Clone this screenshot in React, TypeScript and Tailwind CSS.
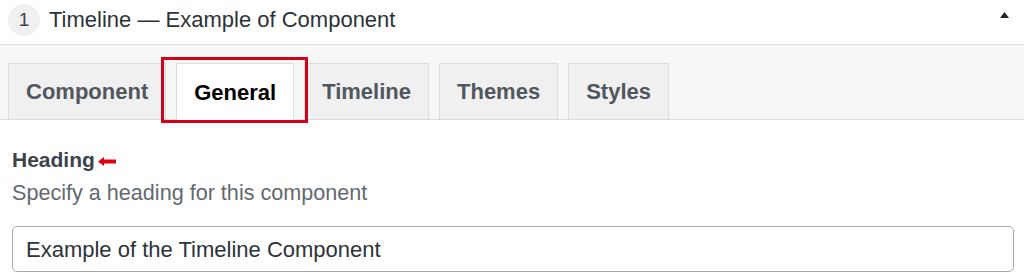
const tabs = ["Component", "General", "Timeline", "Themes", "Styles"];

export default function App() {
  const active = "General";

  return (
    <div
      className="relative w-[1024px] h-[278px] bg-white overflow-hidden"
      style={{ fontFamily: "'Liberation Sans', Arial, sans-serif" }}
    >
      {/* Panel header */}
      <div className="flex items-start h-[45px] pt-[4px] pl-[8px] border-b border-[#dcdcde]">
        <div className="w-[32px] h-[32px] rounded-full bg-[#f0f0f1] flex items-center justify-center text-[19px] text-[#3c434a]">
          1
        </div>
        <div className="ml-[9px] leading-[32px] text-[22px] text-[#2c3338]">
          Timeline — Example of Component
        </div>
        <svg className="ml-auto mr-[15px] mt-[8px]" width="9" height="6" viewBox="0 0 9 6">
          <polygon points="4.5,0 9,6 0,6" fill="#1d2327" />
        </svg>
      </div>

      {/* Tab strip */}
      <div className="flex gap-[10px] bg-[#f6f7f7] pt-[18px] pl-[8px] border-b border-[#dcdcde]">
        {tabs.map((t) => {
          const on = t === active;
          return (
            <div
              key={t}
              className={
                on
                  ? "h-[57px] -mb-px px-[17px] flex items-center border border-b-0 border-[#dcdcde] bg-white text-[22px] font-bold text-[#000]"
                  : "h-[56px] px-[17px] flex items-center border border-b-0 border-[#dcdcde] bg-[#f0f0f1] text-[22px] font-bold text-[#50575e]"
              }
            >
              {t}
            </div>
          );
        })}
      </div>

      {/* Field */}
      <div className="pl-[12px] pr-[10px] pt-[28px]">
        <div className="flex items-center h-[24px]">
          <span className="text-[21px] font-bold text-[#3c434a]">Heading</span>
          <svg className="ml-[3px] mt-[2px]" width="19" height="9" viewBox="0 0 19 9">
            <polygon points="0,4.5 6,0 6,2.5 18,2.5 18,6.5 6,6.5 6,9" fill="#e0000f" />
          </svg>
        </div>
        <div className="mt-[9px] leading-[24px] text-[21.6px] text-[#646970]">
          Specify a heading for this component
        </div>
        <div className="mt-[21px] h-[46px] flex items-center px-[13px] border border-[#a7aaad] rounded-[5px] text-[22px] text-[#2c3338]">
          Example of the Timeline Component
        </div>
      </div>

      {/* Annotation box */}
      <div className="absolute left-[161px] top-[57px] w-[147px] h-[66px] border-[3px] border-[#d0021b]" />
    </div>
  );
}
